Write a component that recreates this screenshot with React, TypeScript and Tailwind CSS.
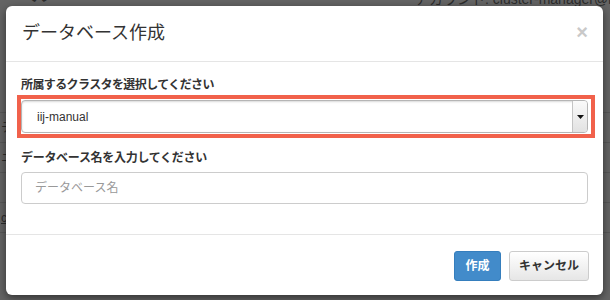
import { ChevronDown } from "lucide-react"

const rows = ["テ", "ニ", "", "c", ""]

export default function App() {
  return (
    <div className="relative w-[610px] h-[300px] overflow-hidden bg-[#646464] font-['Liberation_Sans','Noto_Sans_CJK_JP',sans-serif] text-[#2c2c2c]">
      {/* page behind the dialog */}
      <div className="flex items-start h-[70px]">
        <div className="pl-[9px] -mt-[17px] text-[22px] font-bold leading-none">ール</div>
        <div className="ml-auto w-[195px] -mt-[8px] text-[14px] leading-none whitespace-nowrap overflow-hidden">
          アカウント: cluster-manager@iij.ad.jp
        </div>
      </div>
      <div className="flex flex-col mt-[42px]">
        {rows.map((r, i) => (
          <div key={i} className="h-[30px] border-t border-[#575757] pl-[1px] flex items-center text-[12px]">
            <span className={r === "c" ? "underline" : ""}>{r}</span>
          </div>
        ))}
      </div>

      {/* dialog */}
      <div className="absolute left-[6px] top-[6px] w-[597px] h-[289px] rounded-[6px] bg-white shadow-[0_3px_9px_rgba(0,0,0,0.5)] flex flex-col">
        <div className="h-[56px] border-b border-[#e5e5e5] pl-[16px] pr-[15px] flex items-center justify-between">
          <div className="text-[18px] text-[#333] leading-[25px]">データベース作成</div>
          <div className="text-[20px] font-bold leading-none text-[#c9c9c9] -mt-[4px]">×</div>
        </div>

        <div className="px-[15px] pt-[13px] pb-[30px] flex flex-col">
          <div className="text-[12px] font-bold leading-[20px] text-[#333] tracking-[-0.6px]">
            所属するクラスタを選択してください
          </div>
          <div className="relative mt-[5px] h-[33px]">
            <div className="h-full rounded-[4px] border border-[#b5b5b5] bg-white shadow-[inset_0_1px_2px_rgba(0,0,0,0.15)] flex items-center">
              <span className="pl-[15px] text-[12px] text-[#333] flex-1">iij-manual</span>
              <div className="w-[15px] h-full border-l border-[#c4c4c4] rounded-r-[3px] bg-gradient-to-b from-[#fafafa] to-[#e2e2e2] flex items-center justify-center">
                <svg width="7" height="4" viewBox="0 0 7 4">
                  <path d="M0 0 L7 0 L3.5 4 Z" fill="#111" />
                </svg>
              </div>
            </div>
            <div className="absolute -left-[4px] -top-[5px] -right-[7px] -bottom-[5px] border-4 border-[#f1614b]" />
          </div>

          <div className="mt-[15px] text-[12px] font-bold leading-[20px] text-[#333] tracking-[-0.3px]">
            データベース名を入力してください
          </div>
          <div className="mt-[4px] h-[32px] rounded-[4px] border border-[#ccc] bg-white flex items-center">
            <span className="pl-[13px] text-[12px] text-[#999]">データベース名</span>
          </div>
        </div>

        <div className="border-t border-[#e5e5e5] flex justify-end gap-[8px] pr-[14px] pt-[16px] pb-[14px]">
          <button className="h-[30px] w-[47px] rounded-[3px] border border-[#357ebd] bg-[#428bca] text-white text-[12px] font-bold">
            作成
          </button>
          <button className="h-[30px] w-[80px] rounded-[3px] border border-[#ccc] bg-gradient-to-b from-white to-[#e6e6e6] text-[#333] text-[12px] font-bold">
            キャンセル
          </button>
        </div>
      </div>
    </div>
  )
}
